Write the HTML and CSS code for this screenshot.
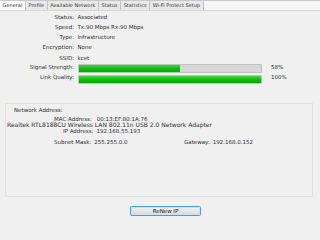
FILE: index.html
```html
<!DOCTYPE html>
<html>
<head>
    <title>Wireless Utility - General</title>
    <link rel="stylesheet" href="styles.css">
</head>
<body>
    <div class="tabs">
        <div class="tab active">General</div>
        <div class="tab">Profile</div>
        <div class="tab">Available Network</div>
        <div class="tab">Status</div>
        <div class="tab">Statistics</div>
        <div class="tab">Wi-Fi Protect Setup</div>
    </div>

    <div class="info">
        <div class="label">Status:</div><div class="value">Associated</div>
        <div class="label">Speed:</div><div class="value">Tx:90 Mbps Rx:90 Mbps</div>
        <div class="label">Type:</div><div class="value">Infrastructure</div>
        <div class="label">Encryption:</div><div class="value">None</div>
        <div class="label">SSID:</div><div class="value">kcet</div>

        <div class="label bar-row">Signal Strength:</div>
        <div class="bar"><div class="fill" style="width: 56%"></div></div>
        <div class="pct bar-row">58%</div>

        <div class="label bar-row">Link Quality:</div>
        <div class="bar"><div class="fill" style="width: 100%"></div></div>
        <div class="pct bar-row">100%</div>
    </div>

    <div class="group">
        <div class="line net-title">Network Address:</div>
        <div class="line mac"><span class="key">MAC Address:</span>00:13:EF:80:1A:76</div>
        <div class="line adapter">Realtek RTL8188CU Wireless LAN 802.11n USB 2.0 Network Adapter</div>
        <div class="line ip"><span class="key">IP Address:</span>192.168.55.193</div>
        <div class="line mask">
            <span class="subnet"><span class="key">Subnet Mask:</span>255.255.0.0</span><span class="key">Gateway:</span>192.168.0.152
        </div>
    </div>

    <button class="renew">ReNew IP</button>
</body>
</html>
```

FILE: styles.css
```css
body {
    margin: 0;
    background-color: #f0f0f0;
    font-family: "DejaVu Sans", Verdana, sans-serif;
    font-size: 5.5px;
    color: #2e2e2e;
    width: 320px;
    height: 240px;
    overflow: hidden;
}

.tabs {
    display: flex;
    height: 9px;
    border-top: 1px solid #c9c9c9;
    border-bottom: 1px solid #d6d6d6;
    background-color: #f6f6f6;
}

.tab {
    font-size: 5px;
    line-height: 9px;
    padding: 0 2.6px;
    background-color: #e9e9e9;
    border-right: 1px solid #c4c4c4;
    color: #333333;
    white-space: nowrap;
}

.tab.active {
    background-color: #fbfbfb;
}

.info {
    display: grid;
    grid-template-columns: 74px 184px auto;
    grid-auto-rows: 10.25px;
    column-gap: 3.5px;
    padding-top: 0.5px;
    line-height: 10.25px;
}

.label {
    text-align: right;
    white-space: nowrap;
}

.value {
    grid-column: 2 / 4;
    white-space: nowrap;
}

.bar-row {
    line-height: 9px;
}

.info > :nth-child(n+11) {
    height: 9px;
}

.bar {
    box-sizing: border-box;
    height: 6px;
    margin-top: 1.7px;
    border: 1px solid #c2c2c2;
    background-color: #d8d8d8;
    border-radius: 1px;
}

.fill {
    height: 100%;
    background: linear-gradient(#3fd83f, #12bb12 50%, #06a606);
}

.pct {
    padding-left: 6px;
}

.group {
    box-sizing: border-box;
    margin: 20px 0 0 5px;
    width: 308px;
    height: 94px;
    border: 1px solid #e1e1e1;
    padding-top: 3px;
}

.line {
    line-height: 6px;
    white-space: nowrap;
}

.key {
    margin-right: 3px;
}

.net-title {
    padding-left: 8px;
}

.mac {
    margin-top: 3px;
    padding-left: 48px;
}

.mac .key {
    margin-right: 5px;
}

.adapter {
    padding-left: 1px;
    font-size: 6px;
}

.ip {
    padding-left: 57px;
}

.mask {
    margin-top: 4.5px;
    padding-left: 48px;
}

.subnet {
    display: inline-block;
    width: 130px;
}

.renew {
    display: block;
    margin: 9px 0 0 130px;
    width: 71px;
    height: 10px;
    padding: 0;
    font-family: "DejaVu Sans", Verdana, sans-serif;
    font-size: 5.5px;
    color: #222222;
    border: 1px solid #4a9ed8;
    border-radius: 1.5px;
    background: linear-gradient(#f4f4f4, #e6e6e6 50%, #d9d9d9);
    box-shadow: inset 0 0 0 1px #c4e3f7;
}
```
